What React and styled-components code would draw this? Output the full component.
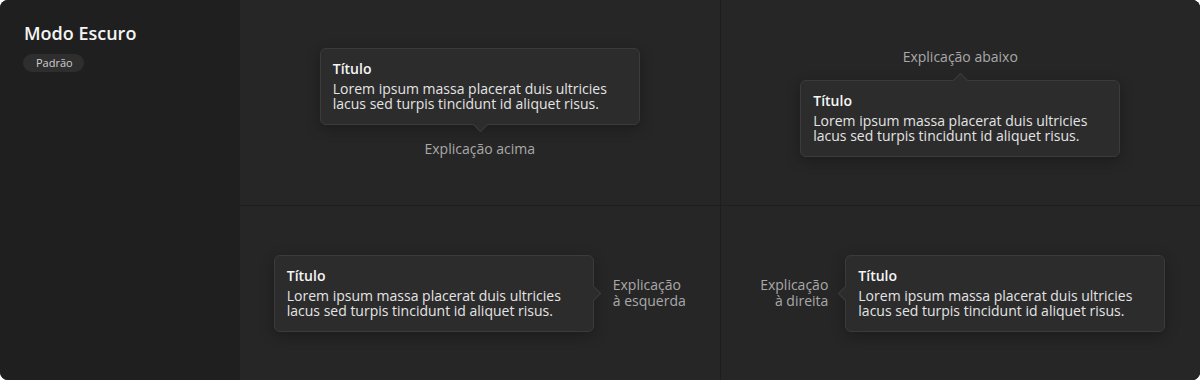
import React from "react";
import styled, { createGlobalStyle, css } from "styled-components";

const Global = createGlobalStyle`
  html, body { margin: 0; padding: 0; background: #ffffff; }
  body { font-family: "Open Sans", "Noto Sans", sans-serif; -webkit-font-smoothing: antialiased; }
`;

const Frame = styled.div`
  width: 1200px;
  height: 380px;
  border-radius: 8px;
  overflow: hidden;
  display: grid;
  grid-template-columns: 240px 1fr;
  background: #262626;
`;

const Sidebar = styled.aside`
  background: #1f1f1f;
  padding: 21px 23px;
  display: flex;
  flex-direction: column;
  align-items: flex-start;
  gap: 9px;
`;

const Heading = styled.h1`
  margin: 0 0 0 1px;
  font-size: 18px;
  line-height: 24px;
  font-weight: 600;
  color: #f4f4f4;
`;

const Badge = styled.span`
  display: inline-block;
  background: #2e2e2e;
  color: #cfcfcf;
  font-size: 11px;
  line-height: 18px;
  padding: 0 11px 0 13px;
  border-radius: 9px;
`;

const Board = styled.main`
  display: grid;
  grid-template-columns: 1fr 1fr;
  grid-template-rows: 205px 1fr;
  gap: 1px;
  background: #1e1e1e;
`;

const Cell = styled.section`
  background: #262626;
  display: flex;
  align-items: center;
  justify-content: center;
  flex-direction: ${(p) => p.$dir};
  gap: ${(p) => p.$gap}px;
  padding-left: ${(p) => p.$shift || 0}px;
`;

const Label = styled.div`
  font-size: 14px;
  line-height: 16px;
  color: #a9a9a9;
  text-align: ${(p) => p.$align || "center"};
`;

const arrowPos = {
  bottom: css`
    left: 50%;
    bottom: -6px;
    margin-left: -5px;
    border-right: 1px solid #3b3b3b;
    border-bottom: 1px solid #3b3b3b;
  `,
  top: css`
    left: 50%;
    top: -6px;
    margin-left: -5px;
    border-left: 1px solid #3b3b3b;
    border-top: 1px solid #3b3b3b;
  `,
  right: css`
    top: 50%;
    right: -6px;
    margin-top: -5px;
    border-right: 1px solid #3b3b3b;
    border-top: 1px solid #3b3b3b;
  `,
  left: css`
    top: 50%;
    left: -6px;
    margin-top: -5px;
    border-left: 1px solid #3b3b3b;
    border-bottom: 1px solid #3b3b3b;
  `,
};

const Tip = styled.div`
  position: relative;
  box-sizing: border-box;
  width: 320px;
  padding: 11px 12px 13px 12px;
  background: #2c2c2c;
  border: 1px solid #3b3b3b;
  border-radius: 6px;
  box-shadow: 0 4px 14px rgba(0, 0, 0, 0.28);
  &::after {
    content: "";
    position: absolute;
    width: 10px;
    height: 10px;
    background: #2c2c2c;
    transform: rotate(45deg);
    ${(p) => arrowPos[p.$arrow]}
  }
`;

const TipTitle = styled.div`
  font-size: 14px;
  line-height: 18px;
  font-weight: 600;
  color: #f6f6f6;
  margin-bottom: 3px;
`;

const TipBody = styled.div`
  font-size: 14px;
  line-height: 15px;
  color: #e4e4e4;
`;

function Tooltip({ arrow }) {
  return (
    <Tip $arrow={arrow}>
      <TipTitle>Título</TipTitle>
      <TipBody>
        Lorem ipsum massa placerat duis ultricies lacus sed turpis tincidunt id aliquet risus.
      </TipBody>
    </Tip>
  );
}

export default function App() {
  return (
    <>
      <Global />
      <Frame>
        <Sidebar>
          <Heading>Modo Escuro</Heading>
          <Badge>Padrão</Badge>
        </Sidebar>
        <Board>
          <Cell $dir="column" $gap={16}>
            <Tooltip arrow="bottom" />
            <Label>Explicação acima</Label>
          </Cell>
          <Cell $dir="column" $gap={15}>
            <Label>Explicação abaixo</Label>
            <Tooltip arrow="top" />
          </Cell>
          <Cell $dir="row" $gap={19}>
            <Tooltip arrow="right" />
            <Label $align="left">
              Explicação
              <br />à esquerda
            </Label>
          </Cell>
          <Cell $dir="row" $gap={17} $shift={5}>
            <Label $align="right">
              Explicação
              <br />à direita
            </Label>
            <Tooltip arrow="left" />
          </Cell>
        </Board>
      </Frame>
    </>
  );
}
